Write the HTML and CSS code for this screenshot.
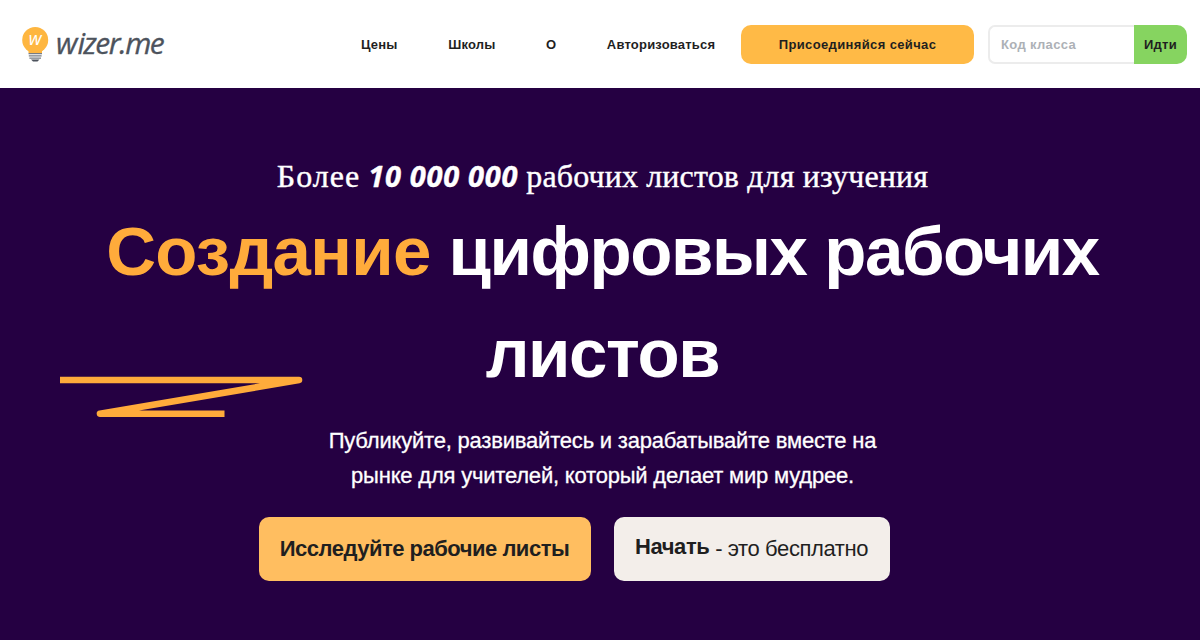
FILE: index.html
```html
<!DOCTYPE html>
<html lang="ru">
<head>
  <meta charset="UTF-8">
  <title>Wizer.me</title>
  <link rel="stylesheet" href="styles.css">
</head>
<body>

  <header class="header">
    <a class="logo">
      <svg class="bulb" width="28" height="38" viewBox="0 0 28 38">
        <circle cx="13.2" cy="14" r="13" fill="#feb640"/>
        <path d="M6.5 24H20V27H6.5Z" fill="#feb640"/>
        <path d="M6.5 27.6H20M6.8 29.9H19.6M7.4 32.1H19" stroke="#777c84" stroke-width="1.4"/>
        <path d="M9 33.4H17.5L15.5 35.6H11Z" fill="#4d535d"/>
        <text class="bulb-letter" x="13.2" y="18.5" text-anchor="middle">w</text>
      </svg>
      <span class="logo-text"><span class="logo-w">w</span>izer.me</span>
    </a>
    <nav class="nav">
      <a>Цены</a>
      <a>Школы</a>
      <a>О</a>
      <a>Авторизоваться</a>
    </nav>
    <button class="join">Присоединяйся сейчас</button>
    <div class="class-code">
      <input type="text" placeholder="Код класса">
      <button class="go">Идти</button>
    </div>
  </header>

  <main class="hero">
    <p class="tagline"><span class="more">Более</span> <span class="count">10 000 000</span> рабочих листов для изучения</p>
    <h1><span class="accent">Создание</span> цифровых рабочих<br>листов</h1>
    <p class="subtitle">Публикуйте, развивайтесь и зарабатывайте вместе на<br>рынке для учителей, который делает мир мудрее.</p>
    <div class="actions">
      <button class="btn explore">Исследуйте рабочие листы</button>
      <button class="btn start"><b>Начать</b> <span>- это бесплатно</span></button>
    </div>
    <svg class="zigzag" width="246" height="44" viewBox="0 0 246 44">
      <path d="M0 5H239L40 38.8H164.5" fill="none" stroke="#ffab3b" stroke-width="6.6" stroke-linejoin="round"/>
    </svg>
  </main>

</body>
</html>
```

FILE: styles.css
```css
* {
  box-sizing: border-box;
}

body {
  margin: 0;
  height: 640px;
  overflow: hidden;
  font-family: "Liberation Sans", Arial, sans-serif;
  color: #1f1f1f;
  background: #fff;
}

button {
  border: 0;
  padding: 0;
  font-family: inherit;
  color: inherit;
}

.header {
  display: flex;
  align-items: center;
  height: 88px;
  padding: 0 13px 0 22px;
}

.logo {
  display: flex;
  align-items: center;
  width: 339px;
}

.bulb {
  margin-top: 2px;
}

.bulb-letter {
  font: italic 18px "Open Sans", sans-serif;
  fill: #fff;
}

.logo-text {
  margin: -2px 0 0 6px;
  font: italic 30px/32px "Open Sans", sans-serif;
  letter-spacing: -1.5px;
  color: #4d535d;
  -webkit-text-stroke: 0.3px #4d535d;
}

.logo-w {
  letter-spacing: 0;
}

.nav {
  display: flex;
  gap: 50.5px;
  width: 380px;
  font-size: 13px;
  font-weight: bold;
  letter-spacing: 0.2px;
  white-space: nowrap;
}

.join {
  width: 233px;
  height: 39px;
  border-radius: 10px;
  background: #ffba46;
  font-size: 13px;
  font-weight: bold;
  letter-spacing: 0.37px;
}

.class-code {
  display: flex;
  width: 199px;
  height: 39px;
  margin-left: auto;
}

.class-code input {
  width: 146px;
  padding: 0 11px;
  border: 2px solid #ececec;
  border-right: 0;
  border-radius: 7px 0 0 7px;
  font: bold 13px "Liberation Sans", Arial, sans-serif;
  letter-spacing: 0.35px;
}

.class-code input::placeholder {
  color: #adb1b6;
}

.go {
  width: 53px;
  border-radius: 0 10px 10px 0;
  background: #86d460;
  font-size: 13px;
  font-weight: bold;
  letter-spacing: 0.3px;
}

.hero {
  position: relative;
  display: flex;
  flex-direction: column;
  align-items: center;
  height: 552px;
  padding: 68px 0 0 5px;
  background: #250042;
  color: #fff;
  text-align: center;
  white-space: nowrap;
}

.tagline {
  margin: 0;
  font: 32px/40px "Liberation Serif", serif;
  letter-spacing: 0.14px;
  -webkit-text-stroke: 0.4px #fff;
}

.more {
  letter-spacing: 1px;
}

.count {
  font: italic bold 29px/40px "Open Sans", sans-serif;
  letter-spacing: 0.7px;
}

h1 {
  margin: 5px 0 0;
  font-size: 69px;
  line-height: 102px;
  letter-spacing: -1.4px;
}

.accent {
  color: #ffab3b;
  letter-spacing: -0.7px;
}

.subtitle {
  margin: 18px 0 0;
  font-size: 22px;
  line-height: 35px;
  letter-spacing: -0.2px;
  -webkit-text-stroke: 0.3px #fff;
}

.actions {
  display: flex;
  gap: 23px;
  margin: 24px 57px 0 0;
}

.btn {
  height: 64px;
  border-radius: 10px;
  color: #1f1f1f;
  font-size: 22px;
}

.explore {
  width: 332px;
  background: #ffbe60;
  font-weight: bold;
  letter-spacing: -0.5px;
}

.start {
  width: 276px;
  background: #f3eeea;
  letter-spacing: -0.4px;
}

.start b {
  position: relative;
  top: -2px;
}

.zigzag {
  position: absolute;
  left: 60px;
  top: 287px;
}
```
